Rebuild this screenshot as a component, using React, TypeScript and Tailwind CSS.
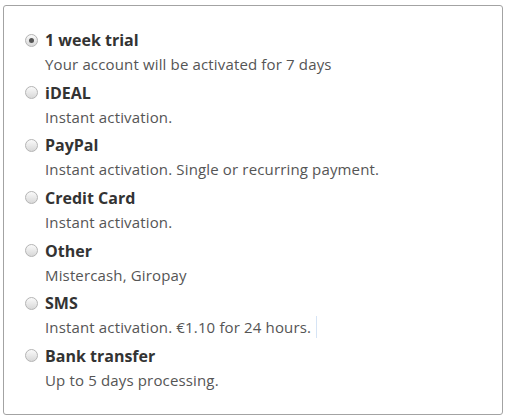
const OPTIONS = [
	{ title: "1 week trial", detail: "Your account will be activated for 7 days", checked: true },
	{ title: "iDEAL", detail: "Instant activation." },
	{ title: "PayPal", detail: "Instant activation. Single or recurring payment." },
	{ title: "Credit Card", detail: "Instant activation." },
	{ title: "Other", detail: "Mistercash, Giropay" },
	{ title: "SMS", detail: "Instant activation. €1.10 for 24 hours.", caret: true },
	{ title: "Bank transfer", detail: "Up to 5 days processing." },
];

type RadioProps = { checked?: boolean };

const Radio = ({ checked }: RadioProps) => (
	<span className="flex h-[13px] w-[13px] shrink-0 items-center justify-center rounded-full border border-[#b4b4b4] bg-gradient-to-b from-[#fafafa] to-[#d8d8d8]">
		{checked && <span className="h-[5px] w-[5px] rounded-full bg-[#555]" />}
	</span>
);

export default function App() {
	return (
		<div className="h-[419px] w-[507px] bg-white pl-[3px] pt-[5px] font-['Open_Sans',sans-serif]">
			<div className="flex h-[410px] w-[500px] flex-col gap-[4.67px] rounded-[3px] border border-[#a3a3a3] pl-[21px] pt-[22px]">
				{OPTIONS.map((option) => (
					<div key={option.title} className="flex flex-col">
						<label className="flex h-[24px] items-center gap-[7px]">
							<Radio checked={option.checked} />
							<span className="text-[16px] font-bold leading-[24px] text-[#333]">{option.title}</span>
						</label>
						<p className="flex h-[24px] items-center pl-[20px] text-[15px] leading-[24px] tracking-[0.15px] text-[#555]">
							{option.detail}
							{option.caret && <span className="ml-[5px] h-[22px] w-px bg-[#d6e4f5]" />}
						</p>
					</div>
				))}
			</div>
		</div>
	);
}
